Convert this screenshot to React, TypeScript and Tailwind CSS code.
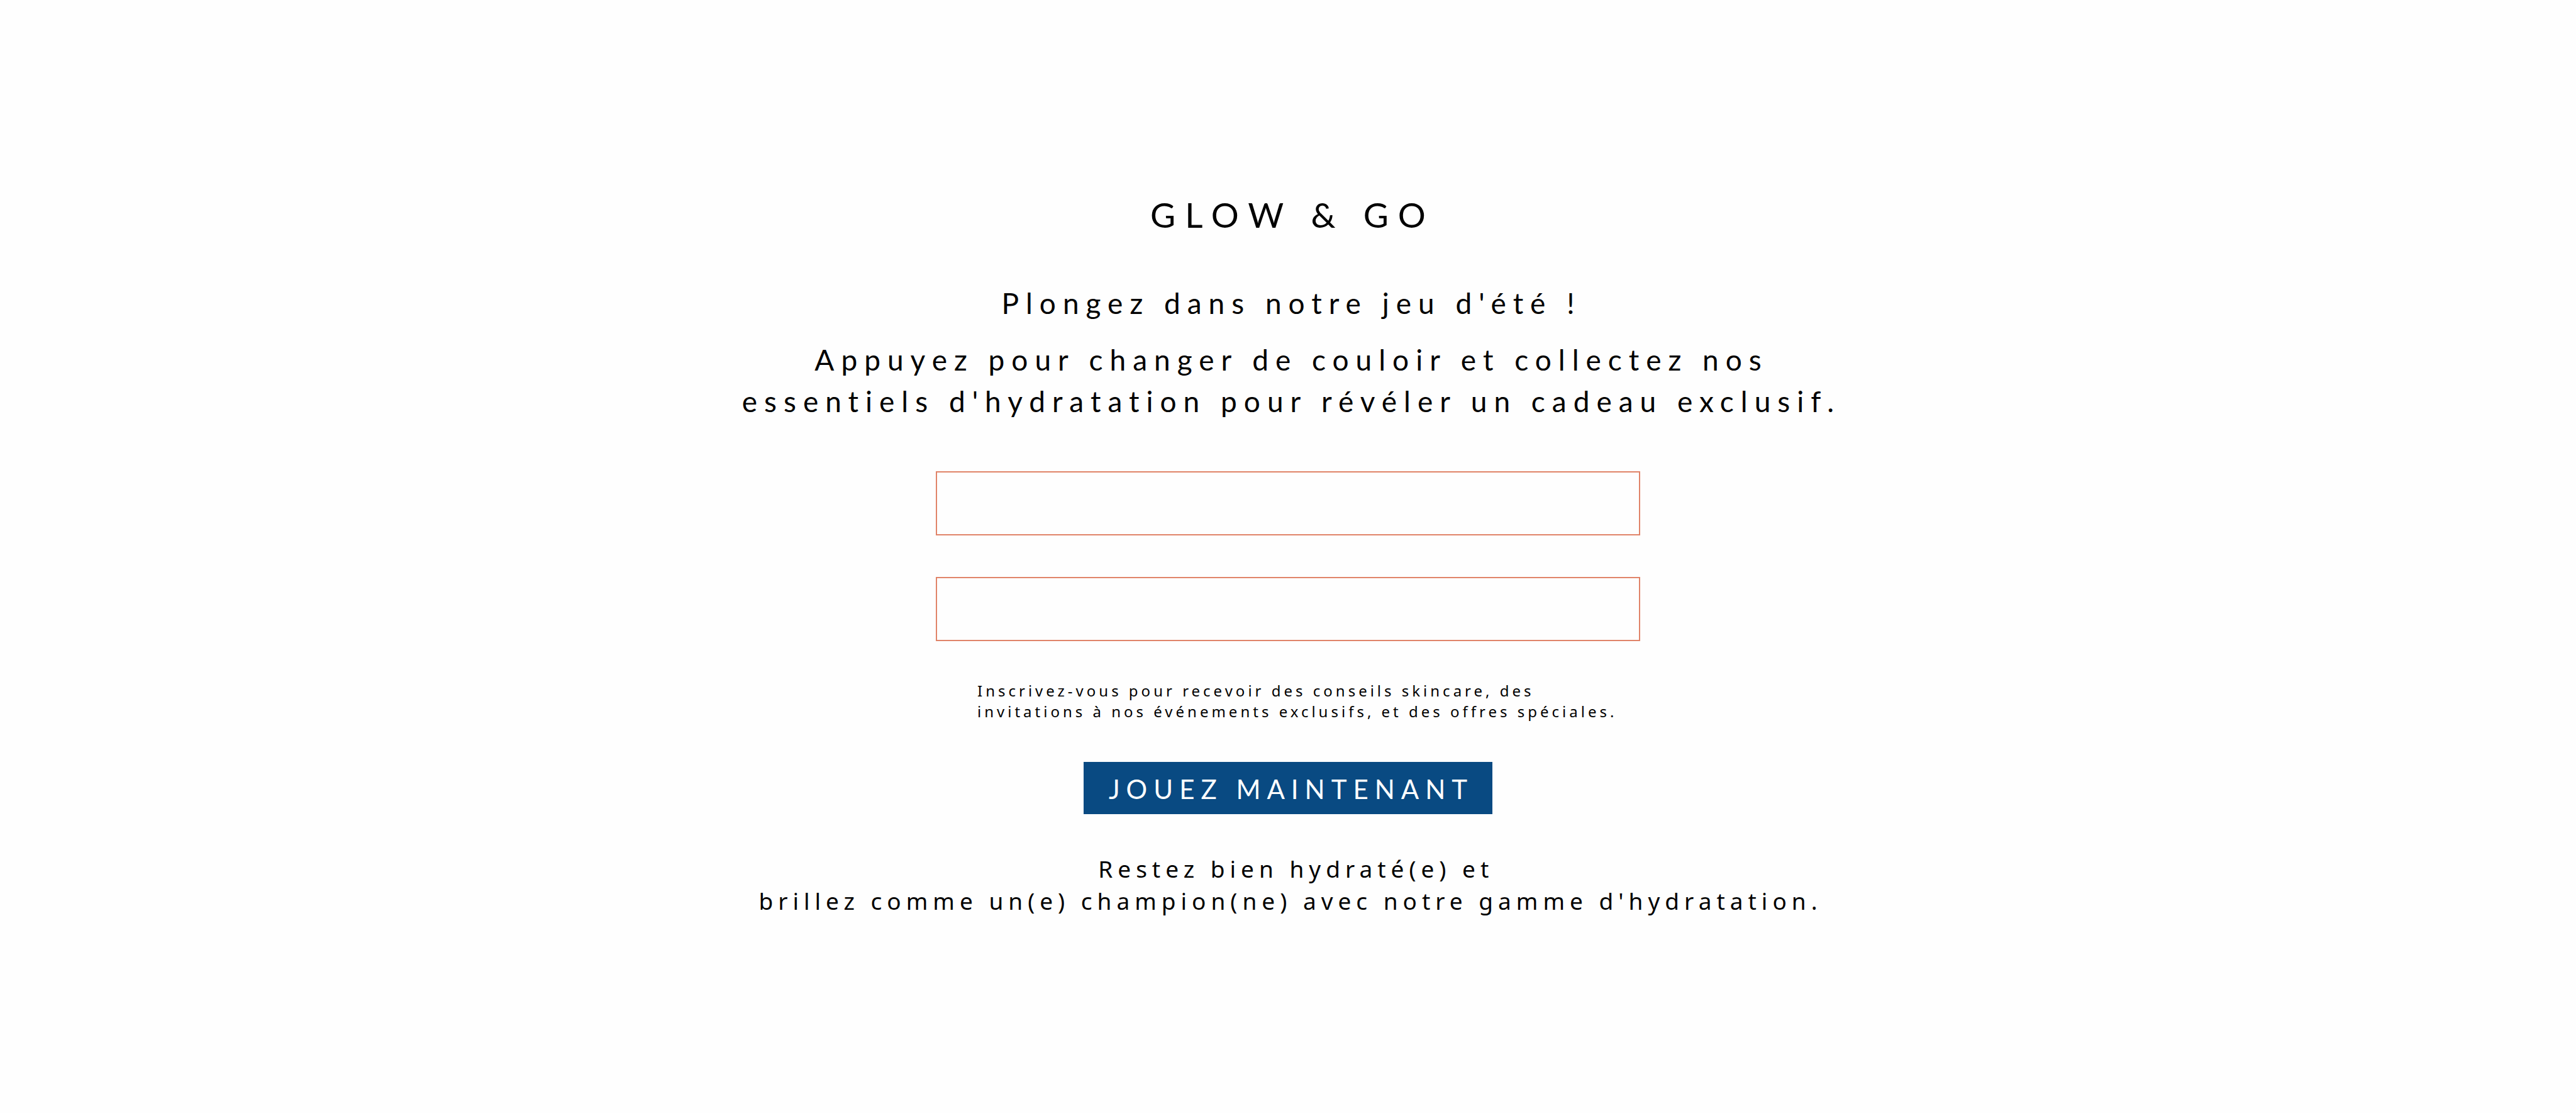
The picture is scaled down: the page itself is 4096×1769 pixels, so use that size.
export default function App() {
  return (
    <main className="flex min-h-screen flex-col items-center bg-[#fefefe] px-8 pt-[308px] pb-16 font-['Lato',sans-serif] text-black">
      <h1 className="pl-[15px] text-center text-[55px] leading-[66px] tracking-[15px]">GLOW &amp; GO</h1>

      <p className="mt-[75px] pl-[11px] text-center text-[46px] leading-[66px] tracking-[11px]">
        Plongez dans notre jeu d'été !
      </p>
      <p className="mt-6 pl-[11px] text-center text-[46px] leading-[66px] tracking-[11px]">
        Appuyez pour changer de couloir et collectez nos
        <br />
        essentiels d'hydratation pour révéler un cadeau exclusif.
      </p>

      <form
        className="mt-[78px] flex w-full max-w-[1120px] flex-col items-center"
        onSubmit={(event) => event.preventDefault()}
      >
        <input
          type="text"
          name="name"
          aria-label="Nom"
          className="h-[102px] w-full border-2 border-[#e08469] bg-transparent px-6 text-4xl outline-none"
        />
        <input
          type="email"
          name="email"
          aria-label="E-mail"
          className="mt-[66px] h-[102px] w-full border-2 border-[#e08469] bg-transparent px-6 text-4xl outline-none"
        />
        <p className="mt-[62px] self-start pl-[66px] font-['Noto_Sans',sans-serif] text-[24px] leading-[33px] tracking-[5px]">
          Inscrivez-vous pour recevoir des conseils skincare, des
          <br />
          invitations à nos événements exclusifs, et des offres spéciales.
        </p>
        <button
          type="submit"
          className="mt-16 h-[83px] w-full max-w-[650px] bg-[#094a82] pt-1 pl-[10px] text-center text-[42px] tracking-[10px] whitespace-nowrap text-white"
        >
          JOUEZ MAINTENANT
        </button>
      </form>

      <p className="mt-[61px] pl-2 text-center font-['Noto_Sans',sans-serif] text-[37px] leading-[51px] tracking-[8px]">
        {"\u00a0"}Restez bien hydraté(e) et
        <br />
        brillez comme un(e) champion(ne) avec notre gamme d'hydratation.
      </p>
    </main>
  );
}
